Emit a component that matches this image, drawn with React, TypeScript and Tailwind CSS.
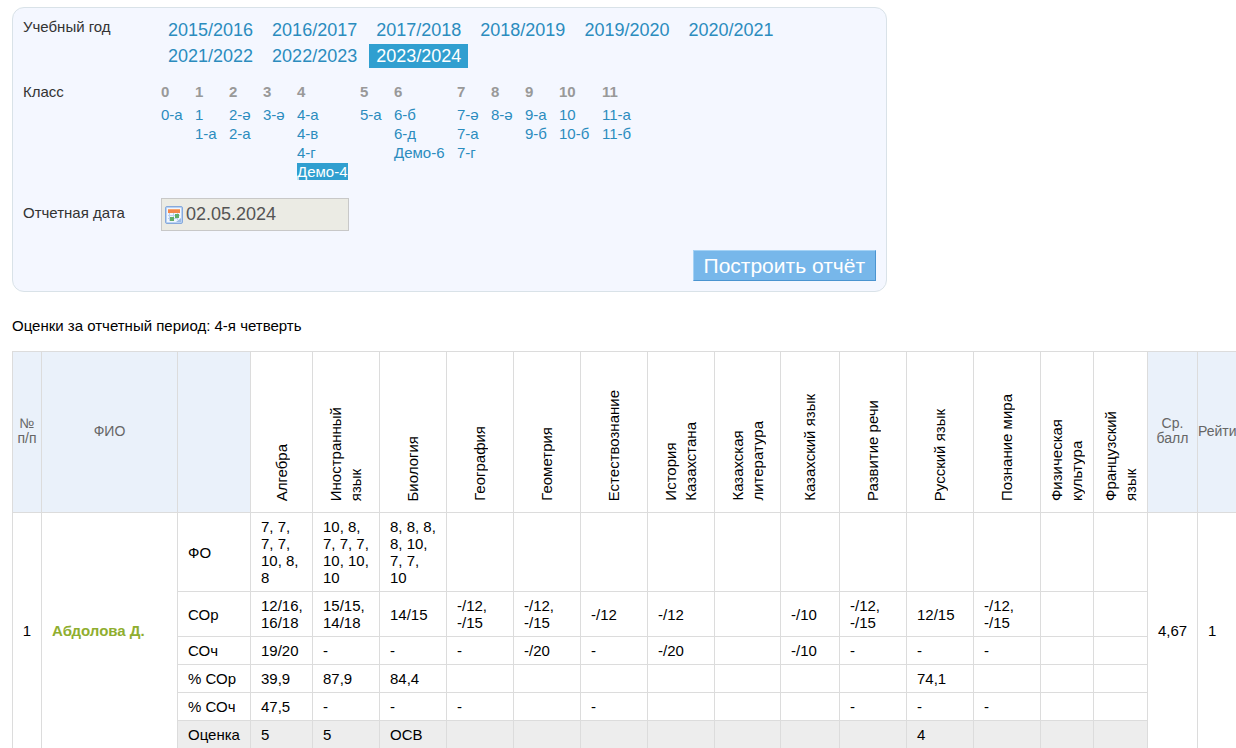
import React from 'react';

const years = [
  '2015/2016', '2016/2017', '2017/2018', '2018/2019', '2019/2020', '2020/2021',
  '2021/2022', '2022/2023', '2023/2024',
];

const grades = [
  { grade: '0', width: 'min-w-[22px]', classes: ['0-а'] },
  { grade: '1', width: 'min-w-[22px]', classes: ['1', '1-а'] },
  { grade: '2', width: 'min-w-[22px]', classes: ['2-ә', '2-а'] },
  { grade: '3', width: 'min-w-[22px]', classes: ['3-ә'] },
  { grade: '4', width: 'min-w-[51px]', classes: ['4-а', '4-в', '4-г', 'Демо-4'] },
  { grade: '5', width: 'min-w-[22px]', classes: ['5-а'] },
  { grade: '6', width: 'min-w-[51px]', classes: ['6-б', '6-д', 'Демо-6'] },
  { grade: '7', width: 'min-w-[22px]', classes: ['7-ә', '7-а', '7-г'] },
  { grade: '8', width: 'min-w-[22px]', classes: ['8-ә'] },
  { grade: '9', width: 'min-w-[22px]', classes: ['9-а', '9-б'] },
  { grade: '10', width: 'min-w-[31px]', classes: ['10', '10-б'] },
  { grade: '11', width: 'min-w-[31px]', classes: ['11-а', '11-б'] },
];

const subjects = [
  { lines: ['Алгебра'], col: 'w-[62px]' },
  { lines: ['Иностранный', 'язык'], col: 'w-[67px]' },
  { lines: ['Биология'], col: 'w-[67px]' },
  { lines: ['География'], col: 'w-[67px]' },
  { lines: ['Геометрия'], col: 'w-[67px]' },
  { lines: ['Естествознание'], col: 'w-[67px]' },
  { lines: ['История', 'Казахстана'], col: 'w-[67px]' },
  { lines: ['Казахская', 'литература'], col: 'w-[66px]' },
  { lines: ['Казахский язык'], col: 'w-[59px]' },
  { lines: ['Развитие речи'], col: 'w-[67px]' },
  { lines: ['Русский язык'], col: 'w-[67px]' },
  { lines: ['Познание мира'], col: 'w-[67px]' },
  { lines: ['Физическая', 'культура'], col: 'w-[53px]' },
  { lines: ['Французский', 'язык'], col: 'w-[54px]' },
];

const rows = [
  {
    label: 'ФО',
    values: ['7, 7, 7, 7, 10, 8, 8', '10, 8, 7, 7, 7, 10, 10, 10', '8, 8, 8, 8, 10, 7, 7, 10', '', '', '', '', '', '', '', '', '', '', ''],
  },
  {
    label: 'СОр',
    values: ['12/16, 16/18', '15/15, 14/18', '14/15', '-/12, -/15', '-/12, -/15', '-/12', '-/12', '', '-/10', '-/12, -/15', '12/15', '-/12, -/15', '', ''],
  },
  {
    label: 'СОч',
    values: ['19/20', '-', '-', '-', '-/20', '-', '-/20', '', '-/10', '-', '-', '-', '', ''],
  },
  {
    label: '% СОр',
    values: ['39,9', '87,9', '84,4', '', '', '', '', '', '', '', '74,1', '', '', ''],
  },
  {
    label: '% СОч',
    values: ['47,5', '-', '-', '-', '', '-', '', '', '', '-', '-', '-', '', ''],
  },
  {
    label: 'Оценка',
    total: true,
    values: ['5', '5', 'ОСВ', '', '', '', '', '', '', '', '4', '', '', ''],
  },
];

const CalendarIcon: React.FC = () => (
  <svg width="18" height="18" viewBox="0 0 18 18" className="shrink-0" aria-hidden="true">
    <rect x="0.5" y="0.5" width="17" height="17" rx="1.5" fill="#b9d2f3" stroke="#86a9dc" />
    <rect x="2" y="2" width="14" height="14" fill="#f1f6fd" />
    <rect x="3" y="3" width="12" height="4" fill="#f4864a" />
    <rect x="3" y="3" width="12" height="1" fill="#f9a670" />
    <path d="M3 9.5h12M3 12.5h9M4.5 7v8M8.5 7v8M12.5 7v7" stroke="#bcd2f0" strokeWidth="1" />
    <rect x="10" y="8" width="4" height="4" fill="#62ad68" />
    <rect x="5" y="11" width="4" height="4" fill="#62ad68" />
    <path d="M11 16l5-4v4z" fill="#9dbbe6" />
  </svg>
);

const ReportForm: React.FC = () => {
  return (
    <form
      className="max-w-[875px] rounded-xl border border-[#d9e2e8] bg-[#f4f7ff] p-[10px] text-[#333]"
      onSubmit={(e) => e.preventDefault()}
    >
      <div className="flex">
        <div className="w-[138px] shrink-0 leading-[18px]">Учебный год</div>
        <div className="flex flex-wrap gap-x-[5px] gap-y-0.5 text-lg leading-6">
          {years.map((year) => (
            <a
              key={year}
              href="#"
              className={year === '2023/2024' ? 'bg-[#309fd0] px-[7px] text-white' : 'px-[7px] text-[#2b8cbe]'}
            >
              {year}
            </a>
          ))}
        </div>
      </div>

      <div className="mt-[13px] flex">
        <div className="w-[138px] shrink-0 leading-[22px]">Класс</div>
        <div className="flex gap-3">
          {grades.map(({ grade, width, classes }) => (
            <div key={grade} className={width}>
              <div className="leading-[22px] font-bold text-[#999]">{grade}</div>
              <ul className="mt-0.5">
                {classes.map((name) => (
                  <li key={name} className="leading-[19px] whitespace-nowrap">
                    <a href="#" className={name === 'Демо-4' ? 'bg-[#309fd0] text-white' : 'text-[#2b8cbe]'}>
                      {name}
                    </a>
                  </li>
                ))}
              </ul>
            </div>
          ))}
        </div>
      </div>

      <div className="mt-[17px] flex">
        <label htmlFor="report-date" className="w-[138px] shrink-0 leading-[30px]">
          Отчетная дата
        </label>
        <div className="flex h-[33px] w-[188px] items-center gap-[3px] border border-[#c8c8c8] bg-[#ebebe4] px-[3px]">
          <CalendarIcon />
          <input
            id="report-date"
            type="text"
            defaultValue="02.05.2024"
            disabled
            className="min-w-0 flex-1 bg-transparent pb-0.5 text-lg leading-6 text-[#545454]"
          />
        </div>
      </div>

      <div className="mt-[19px] flex justify-end">
        <button
          type="submit"
          className="h-[31px] border border-t-[#a5d2f5] border-r-[#4b94d0] border-b-[#4b94d0] border-l-[#a5d2f5] bg-[#77b7ea] px-[10px] text-[21px] leading-6 text-white"
        >
          Построить отчёт
        </button>
      </div>
    </form>
  );
};

const GradesTable: React.FC = () => {
  const headCell = 'border border-[#dcdcdc] bg-[#eaf1fa] pb-0.5 text-sm leading-[15px] font-normal text-[#666]';
  const cell = 'border border-[#dcdcdc] px-[10px] py-[5px]';

  return (
    <table className="mt-[15px] w-[1236px] table-fixed border-collapse text-left leading-[17px]">
      <colgroup>
        <col className="w-[29px]" />
        <col className="w-[136px]" />
        <col className="w-[73px]" />
        {subjects.map(({ lines, col }) => (
          <col key={lines[0]} className={col} />
        ))}
        <col className="w-[50px]" />
        <col className="w-[51px]" />
      </colgroup>
      <thead>
        <tr className="h-[161px]">
          <th className={`${headCell} text-center`}>№<br />п/п</th>
          <th className={`${headCell} text-center`}>ФИО</th>
          <th className={headCell}></th>
          {subjects.map(({ lines }) => (
            <th key={lines[0]} className="border border-[#dcdcdc] pb-[11px] align-bottom font-normal">
              <div className="flex justify-center">
                <div className="rotate-180 leading-5 [writing-mode:vertical-rl]">
                  {lines.map((line) => (
                    <span key={line} className="block whitespace-nowrap">{line}</span>
                  ))}
                </div>
              </div>
            </th>
          ))}
          <th className={`${headCell} text-center`}>Ср.<br />балл</th>
          <th className={`${headCell} text-center`}>Рейтинг</th>
        </tr>
      </thead>
      <tbody>
        {rows.map(({ label, values, total }, i) => (
          <tr key={label}>
            {i === 0 && (
              <>
                <td rowSpan={rows.length} className="border border-[#dcdcdc] text-center">1</td>
                <td rowSpan={rows.length} className={cell}>
                  <a href="#" className="font-bold text-[#8fae2f]">Абдолова Д.</a>
                </td>
              </>
            )}
            <td className={total ? `${cell} bg-[#ededed]` : cell}>{label}</td>
            {values.map((value, j) => (
              <td key={j} className={total ? `${cell} bg-[#ededed]` : cell}>{value}</td>
            ))}
            {i === 0 && (
              <>
                <td rowSpan={rows.length} className={cell}>4,67</td>
                <td rowSpan={rows.length} className={cell}>1</td>
              </>
            )}
          </tr>
        ))}
      </tbody>
    </table>
  );
};

const App: React.FC = () => {
  return (
    <div className="overflow-hidden bg-white pt-[7px] pl-3 font-['Liberation_Sans',Arial,sans-serif] text-[15px] text-black">
      <ReportForm />
      <p className="mt-6 leading-5">Оценки за отчетный период: 4-я четверть</p>
      <GradesTable />
    </div>
  );
};

export default App;
